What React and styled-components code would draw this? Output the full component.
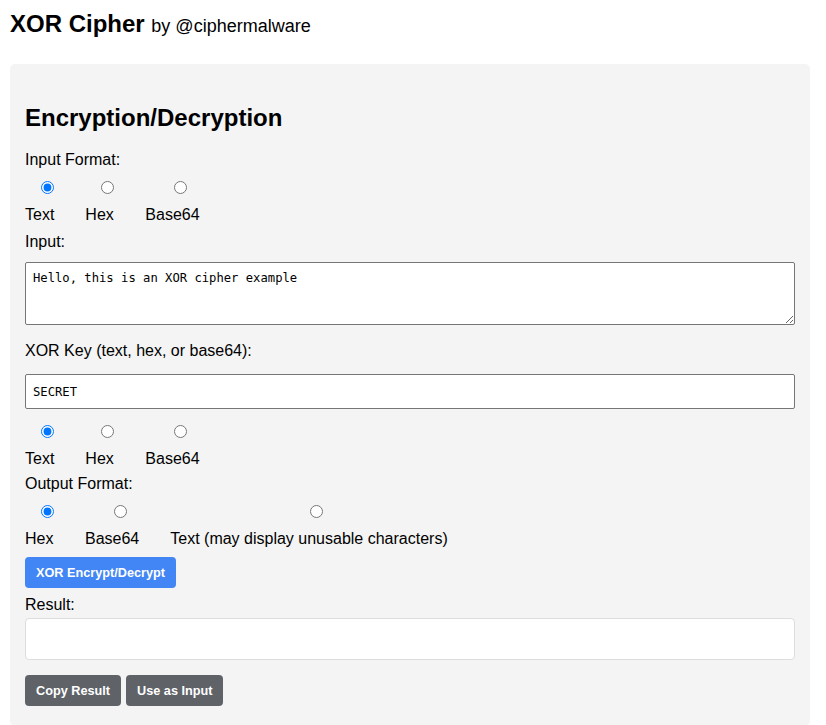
import React from "react";
import styled, { createGlobalStyle } from "styled-components";

const GlobalStyle = createGlobalStyle`
  html, body { margin: 0; padding: 0; background: #ffffff; }
  body { font-family: "Liberation Sans", Arial, sans-serif; color: #000; }
  * { box-sizing: border-box; }
`;

const Page = styled.div`
  padding: 10px;
`;

const Title = styled.h1`
  margin: 0 0 24px;
  font-size: 24px;
  line-height: 28px;
  font-weight: bold;
`;

const Byline = styled.span`
  font-size: 18px;
  font-weight: normal;
`;

const Panel = styled.section`
  max-width: 800px;
  background: #f4f4f4;
  border-radius: 5px;
  padding: 20px 15px 20px;
`;

const SectionTitle = styled.h2`
  margin: 20px 0 19px;
  font-size: 24px;
  line-height: 28px;
  font-weight: bold;
`;

const FieldLabel = styled.label`
  display: block;
  font-size: 16px;
  line-height: 18px;
  margin-top: ${(p) => p.$gap || 0}px;
`;

const RadioGroup = styled.div`
  display: flex;
  gap: 31px;
  margin-top: ${(p) => p.$gap || 0}px;
`;

const RadioOption = styled.label`
  display: flex;
  flex-direction: column;
  font-size: 16px;
  line-height: 18px;
`;

const Radio = styled.input.attrs({ type: "radio" })`
  width: 13px;
  height: 13px;
  margin: 0 0 12px 16px;
  align-self: center;
`;

const TextArea = styled.textarea`
  display: block;
  width: 100%;
  height: 63px;
  margin-top: ${(p) => p.$gap || 0}px;
  padding: 8px 7px;
  border: 1px solid #767676;
  border-radius: 2px;
  background: #fff;
  font-family: "DejaVu Sans Mono", "Liberation Mono", monospace;
  font-size: 12.2px;
  color: #000;
`;

const TextInput = styled.input`
  display: block;
  width: 100%;
  height: 35px;
  margin-top: ${(p) => p.$gap || 0}px;
  padding: 0 7px;
  border: 1px solid #767676;
  border-radius: 2px;
  background: #fff;
  font-family: "DejaVu Sans Mono", "Liberation Mono", monospace;
  font-size: 12.2px;
  color: #000;
`;

const Button = styled.button`
  height: 31px;
  padding: 0 11px;
  border: none;
  border-radius: 4px;
  background: ${(p) => (p.$variant === "secondary" ? "#5f6368" : "#4285f4")};
  color: #fff;
  font-family: "Liberation Sans", Arial, sans-serif;
  font-weight: bold;
  font-size: 12.7px;
  cursor: pointer;
`;

const ActionRow = styled.div`
  display: flex;
  gap: 5px;
  margin-top: ${(p) => p.$gap || 0}px;
`;

const ResultBox = styled.div`
  height: 42px;
  margin-top: ${(p) => p.$gap || 0}px;
  background: #fff;
  border: 1px solid #ddd;
  border-radius: 4px;
`;

function RadioSet({ name, options, gap }) {
  return (
    <RadioGroup $gap={gap}>
      {options.map((o, i) => (
        <RadioOption key={o}>
          <Radio name={name} defaultChecked={i === 0} />
          {o}
        </RadioOption>
      ))}
    </RadioGroup>
  );
}

export default function App() {
  return (
    <>
      <GlobalStyle />
      <Page>
        <Title>
          XOR Cipher <Byline>by @ciphermalware</Byline>
        </Title>
        <Panel>
          <SectionTitle>Encryption/Decryption</SectionTitle>
          <FieldLabel>Input Format:</FieldLabel>
          <RadioSet name="inFmt" options={["Text", "Hex", "Base64"]} gap={12} />
          <FieldLabel $gap={9}>Input:</FieldLabel>
          <TextArea $gap={11} defaultValue="Hello, this is an XOR cipher example" />
          <FieldLabel $gap={17}>XOR Key (text, hex, or base64):</FieldLabel>
          <TextInput $gap={14} defaultValue="SECRET" />
          <RadioSet name="keyFmt" options={["Text", "Hex", "Base64"]} gap={16} />
          <FieldLabel $gap={7}>Output Format:</FieldLabel>
          <RadioSet
            name="outFmt"
            options={["Hex", "Base64", "Text (may display unusable characters)"]}
            gap={12}
          />
          <ActionRow $gap={9}>
            <Button>XOR Encrypt/Decrypt</Button>
          </ActionRow>
          <FieldLabel $gap={8}>Result:</FieldLabel>
          <ResultBox $gap={4} />
          <ActionRow $gap={15}>
            <Button $variant="secondary">Copy Result</Button>
            <Button $variant="secondary">Use as Input</Button>
          </ActionRow>
        </Panel>
      </Page>
    </>
  );
}
